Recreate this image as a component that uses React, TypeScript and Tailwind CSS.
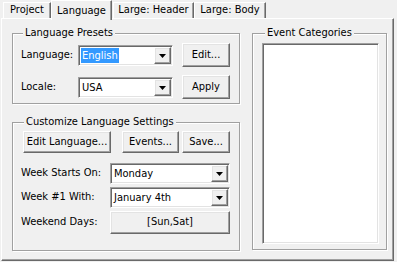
import React from "react";

const raised =
  "bg-[#f0f0f0] border border-t-white border-l-white border-r-[#696969] border-b-[#696969] shadow-[inset_-1px_-1px_0_#a0a0a0,inset_1px_1px_0_#e3e3e3]";
const sunken =
  "bg-white border border-t-[#a0a0a0] border-l-[#a0a0a0] border-r-white border-b-white shadow-[inset_1px_1px_0_#696969,inset_-1px_-1px_0_#e3e3e3]";

function Arrow() {
  return (
    <svg width="7" height="4" viewBox="0 0 7 4">
      <path d="M0 0H7L3.5 4Z" fill="#000" />
    </svg>
  );
}

function Combo({ value, w, selected }: { value: string; w: string; selected?: boolean }) {
  return (
    <div className={`${sunken} ${w} h-[21px] flex items-center p-[1px]`}>
      <div className="flex-1 flex items-center pl-[1px] min-w-0">
        {selected ? (
          <span className="bg-[#3399ff] text-white px-[1px] leading-[15px]">{value}</span>
        ) : (
          <span className="px-[1px] leading-[15px]">{value}</span>
        )}
      </div>
      <div className={`${raised} w-[17px] h-[17px] flex items-center justify-center`}>
        <Arrow />
      </div>
    </div>
  );
}

function Btn({ label, w, h }: { label: string; w: string; h: string }) {
  return <div className={`${raised} ${w} ${h} flex items-center justify-center`}>{label}</div>;
}

function Group({
  title,
  w,
  h,
  titleLeft,
  children,
  className,
}: {
  title: string;
  w: string;
  h: string;
  titleLeft: string;
  children: React.ReactNode;
  className?: string;
}) {
  return (
    <div
      className={`relative border border-[#a0a0a0] shadow-[inset_1px_1px_0_white,1px_1px_0_white] ${w} ${h} ${className ?? ""}`}
    >
      <span className={`absolute ${titleLeft} top-[-8px] px-[2px] bg-[#f0f0f0] leading-[14px]`}>{title}</span>
      {children}
    </div>
  );
}

export default function App() {
  return (
    <div className="w-[397px] h-[262px] bg-[#f0f0f0] overflow-hidden text-[11px] text-black font-['Tahoma','DejaVu_Sans_Condensed','Liberation_Sans',sans-serif]">
      {/* tabs */}
      <div className="h-[18px] flex items-end pl-[3px]">
        <div className="w-[48px] h-[16px] flex items-center justify-center border border-b-0 border-t-white border-l-white border-r-[#696969] shadow-[inset_-1px_0_0_#a0a0a0]">
          Project
        </div>
        <div className="relative z-10 w-[61px] h-[20px] mb-[-2px] flex items-start pt-[2px] justify-center bg-[#f0f0f0] border border-b-0 border-t-white border-l-white border-r-[#696969] shadow-[inset_-1px_0_0_#a0a0a0]">
          Language
        </div>
        <div className="w-[81px] h-[16px] ml-[1px] flex items-center justify-center border border-b-0 border-t-white border-l-white border-r-[#696969] shadow-[inset_-1px_0_0_#a0a0a0]">
          Large: Header
        </div>
        <div className="w-[72px] h-[16px] flex items-center justify-center border border-b-0 border-t-white border-l-white border-r-[#696969] shadow-[inset_-1px_0_0_#a0a0a0]">
          Large: Body
        </div>
      </div>
      {/* panel */}
      <div className="ml-[1px] w-[393px] h-[243px] border border-t-white border-l-white border-r-[#696969] border-b-[#696969] shadow-[inset_-1px_-1px_0_#a0a0a0] pl-[10px] pt-[14px] flex items-start">
        <div className="flex flex-col w-[228px]">
          <Group title="Language Presets" w="w-[228px]" h="h-[71px]" titleLeft="left-[10px]">
            <div className="flex flex-col pl-[8px] pt-[9px]">
              <div className="flex items-start h-[24px]">
                <div className="w-[57px] h-[24px] flex items-center">Language:</div>
                <div className="mt-[2px]">
                  <Combo value="English" w="w-[95px]" selected />
                </div>
                <div className="ml-[9px]">
                  <Btn label="Edit..." w="w-[48px]" h="h-[24px]" />
                </div>
              </div>
              <div className="flex items-start h-[24px] mt-[8px]">
                <div className="w-[57px] h-[24px] flex items-center">Locale:</div>
                <div className="mt-[2px]">
                  <Combo value="USA" w="w-[95px]" />
                </div>
                <div className="ml-[9px]">
                  <Btn label="Apply" w="w-[48px]" h="h-[24px]" />
                </div>
              </div>
            </div>
          </Group>
          <Group title="Customize Language Settings" w="w-[228px]" h="h-[129px]" titleLeft="left-[11px]" className="mt-[18px]">
            <div className="flex flex-col pl-[8px] pt-[8px]">
              <div className="flex pl-[2px]">
                <Btn label="Edit Language..." w="w-[88px]" h="h-[22px]" />
                <div className="ml-[11px]">
                  <Btn label="Events..." w="w-[57px]" h="h-[22px]" />
                </div>
                <div className="ml-[3px]">
                  <Btn label="Save..." w="w-[48px]" h="h-[22px]" />
                </div>
              </div>
              <div className="flex items-center mt-[10px]">
                <div className="w-[89px]">Week Starts On:</div>
                <Combo value="Monday" w="w-[120px]" />
              </div>
              <div className="flex items-center mt-[3px]">
                <div className="w-[89px]">Week #1 With:</div>
                <Combo value="January 4th" w="w-[120px]" />
              </div>
              <div className="flex items-center mt-[3px]">
                <div className="w-[89px]">Weekend Days:</div>
                <Btn label="[Sun,Sat]" w="w-[120px]" h="h-[23px]" />
              </div>
            </div>
          </Group>
        </div>
        <Group title="Event Categories" w="w-[135px]" h="h-[217px]" titleLeft="left-[12px]" className="ml-[12px]">
          <div className="pl-[9px] pt-[9px]">
            <div className={`${sunken} w-[117px] h-[201px]`} />
          </div>
        </Group>
      </div>
    </div>
  );
}
